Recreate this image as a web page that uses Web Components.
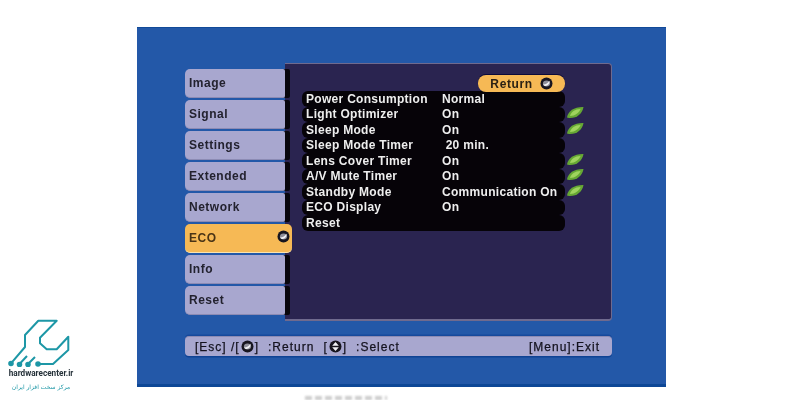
<!DOCTYPE html>
<html>
<head>
<meta charset="utf-8">
<title>ECO</title>
<style>
html,body{margin:0;height:400px;overflow:hidden;background:#fff;font-family:"Liberation Sans",sans-serif;}
</style>
</head>
<body>
<projector-screen>
  <menu-tab>Image</menu-tab>
  <menu-tab>Signal</menu-tab>
  <menu-tab>Settings</menu-tab>
  <menu-tab>Extended</menu-tab>
  <menu-tab>Network</menu-tab>
  <menu-tab active>ECO</menu-tab>
  <menu-tab>Info</menu-tab>
  <menu-tab>Reset</menu-tab>
  <eco-row slot="rows" label="Power Consumption" value="Normal"></eco-row>
  <eco-row slot="rows" label="Light Optimizer" value="On" leaf></eco-row>
  <eco-row slot="rows" label="Sleep Mode" value="On" leaf></eco-row>
  <eco-row slot="rows" label="Sleep Mode Timer" value="&nbsp;20 min."></eco-row>
  <eco-row slot="rows" label="Lens Cover Timer" value="On" leaf></eco-row>
  <eco-row slot="rows" label="A/V Mute Timer" value="On" leaf></eco-row>
  <eco-row slot="rows" label="Standby Mode" value="Communication On" leaf></eco-row>
  <eco-row slot="rows" label="ECO Display" value="On"></eco-row>
  <eco-row slot="rows" label="Reset" value=""></eco-row>
</projector-screen>
<cut-caption></cut-caption>
<site-logo></site-logo>

<script>
// small round "enter" glyph used on the return pill, ECO tab and status bar
const enterIcon = `<svg width="13" height="13" viewBox="0 0 13 13"><circle cx="6.5" cy="6.5" r="6" fill="#17151f"/><ellipse cx="6.5" cy="6.5" rx="3.6" ry="3" fill="#8f8f9a"/><path d="M3 7.5 C6 7.5 8 6 9.5 3.8 C10 6.5 8 9 5.5 9 C4.5 9 3.5 8.4 3 7.5Z" fill="#f2f2f6"/></svg>`;

class MenuTab extends HTMLElement{
    constructor(){
        super();
        this.attachShadow({mode:"open"});
        this.shadowRoot.innerHTML = `
<style>
:host{
    display:flex;
    align-items:center;
    justify-content:space-between;
    box-sizing:border-box;
    position:relative;
    width:100px;
    height:29px;
    padding:0 2px 0 4px;
    background:#a8a7cf;
    border-radius:5px 2px 2px 5px;
    border-bottom:1px solid #8c8bb4;
    box-shadow:5px 0 0 #08060c;
    color:#23222f;
    font-size:12px;
    font-weight:bold;
    letter-spacing:.5px;
}
:host([active]){
    width:107px;
    background:#f6b955;
    border-radius:5px;
    box-shadow:none;
    border-bottom:1px solid #fbe3ae;
    color:#4a3416;
}
</style>
<span><slot></slot></span>
<span id="icon"></span>`;
    }
    connectedCallback(){
        if(this.hasAttribute("active")){
            this.shadowRoot.querySelector("#icon").innerHTML = enterIcon;
        }
    }
}
customElements.define("menu-tab", MenuTab);

class EcoRow extends HTMLElement{
    constructor(){
        super();
        this.attachShadow({mode:"open"});
        this.shadowRoot.innerHTML = `
<style>
:host{
    display:flex;
    align-items:center;
    position:relative;
    height:15.5px;
    padding-left:4px;
    background:#060308;
    border-radius:6px;
    color:#eeeeee;
    font-size:12px;
    font-weight:bold;
    letter-spacing:.3px;
    white-space:nowrap;
}
#label{width:136px;}
svg{position:absolute;left:264px;top:-0.5px;display:none;}
:host([leaf]) svg{display:block;}
</style>
<span id="label"></span>
<span id="value"></span>
<svg width="18" height="13" viewBox="0 0 18 13"><path d="M1 11.5 C2 5 8 .8 17.5 1 C16.5 7.5 11 12.5 3 12 Z" fill="#66a834"/><path d="M4 10 C5 6 9 3 14.5 3 C13.5 6.5 9 10 4 10Z" fill="#9fd45e"/></svg>`;
    }
    connectedCallback(){
        this.shadowRoot.querySelector("#label").textContent = this.getAttribute("label");
        this.shadowRoot.querySelector("#value").textContent = this.getAttribute("value");
    }
}
customElements.define("eco-row", EcoRow);

class ProjectorScreen extends HTMLElement{
    constructor(){
        super();
        this.attachShadow({mode:"open"});
        this.shadowRoot.innerHTML = `
<style>
:host{
    display:block;
    box-sizing:border-box;
    width:529px;
    height:360px;
    margin:27px 0 0 137px;
    padding:35px 54px 0 48px;
    background:#2358a8;
    border-top:1px solid #124a98;
    border-bottom:3px solid #0d4796;
    font-family:"Liberation Sans",sans-serif;
}
#wrap{filter:blur(.5px);}
#main{display:flex;align-items:flex-start;height:258px;}
#tabs{display:flex;flex-direction:column;gap:2px;margin-top:6px;width:100px;flex:none;}
#panel{
    flex:1;
    box-sizing:border-box;
    height:258px;
    padding:11px 46px 0 17px;
    background:#2a2450;
    border:1px solid #6f6a8e;
    border-left:none;
    border-bottom:2px solid #6f6a8e;
    border-radius:0 4px 4px 0;
}
#return{
    display:flex;
    align-items:center;
    justify-content:center;
    gap:7px;
    position:relative;
    box-sizing:border-box;
    width:87px;
    height:17px;
    margin-left:auto;
    background:#f6b955;
    border-radius:8px;
    box-shadow:0 -1px 0 #0b0a3a;
    color:#2c2214;
    font-size:12px;
    font-weight:bold;
    letter-spacing:.6px;
    z-index:1;
}
#rows{margin-top:-1px;}
#bar{
    display:flex;
    align-items:center;
    justify-content:space-between;
    box-sizing:border-box;
    height:20px;
    margin-top:15px;
    padding:0 12px 0 10px;
    background:#a8a7cf;
    border-radius:4px;
    border-top:1px solid #8c8bb4;
    box-shadow:0 1.5px 0 #0f4394,0 -1.5px 0 #16499c;
    color:#14131f;
    font-size:12px;
    letter-spacing:1px;
    -webkit-text-stroke:.25px #14131f;
}
#bar span{display:flex;align-items:center;white-space:pre;}
.g{margin:0 1px;}
.w{margin-left:9px;}
</style>
<div id="wrap">
<div id="main">
  <div id="tabs"><slot></slot></div>
  <div id="panel">
    <div id="return">Return ${enterIcon}</div>
    <div id="rows"><slot name="rows"></slot></div>
  </div>
</div>
<div id="bar">
  <span>[Esc] /[<span class="g">${enterIcon}</span>]<span class="w">:Return</span><span class="w">[</span><span class="g"><svg width="13" height="13" viewBox="0 0 13 13"><circle cx="6.5" cy="6.5" r="6" fill="#17151f"/><path d="M6.5 2 9.8 5.8H3.2ZM6.5 11 3.2 7.2H9.8Z" fill="#f2f2f6"/></svg></span>]<span class="w">:Select</span></span>
  <span>[Menu]:Exit</span>
</div>
</div>`;
    }
}
customElements.define("projector-screen", ProjectorScreen);

// the caption under the photo is cropped by the frame, only its top edge shows
class CutCaption extends HTMLElement{
    constructor(){
        super();
        this.attachShadow({mode:"open"});
        this.shadowRoot.innerHTML = `
<style>
:host{
    display:block;
    width:82px;
    height:4px;
    margin:9px 0 0 305px;
    background:repeating-linear-gradient(90deg,#b9b9b9 0 7px,#fff 7px 10px);
    filter:blur(1px);
    opacity:.7;
}
</style>`;
    }
}
customElements.define("cut-caption", CutCaption);

class SiteLogo extends HTMLElement{
    constructor(){
        super();
        this.attachShadow({mode:"open"});
        this.shadowRoot.innerHTML = `
<style>
:host{
    display:flex;
    flex-direction:column;
    align-items:center;
    position:absolute;
    left:5px;
    top:318px;
    width:72px;
    filter:blur(.3px);
}
svg{display:block;}
#name{font:bold 8.2px Roboto,sans-serif;color:#26323a;line-height:12px;white-space:nowrap;}
#fa{font:6px "DejaVu Sans",sans-serif;color:#1d97a6;line-height:11px;margin-top:2px;white-space:nowrap;}
</style>
<svg width="72" height="49" viewBox="0 0 72 49" fill="none" stroke="#1d97a6" stroke-width="2" stroke-linejoin="round">
  <path d="M6 45.3 L20 29 V17 L33.3 2.7 H51.7 L35 19.7 V25.3 L41.7 31.3 H51.7 L63.3 18.7 V32 L48 46 H33"/>
  <path d="M14.5 46 L22 38 M23 46 L30 39"/>
  <circle cx="6" cy="45.5" r="1.8" fill="#1d97a6"/><circle cx="14.5" cy="46.5" r="1.8" fill="#1d97a6"/><circle cx="23" cy="46.5" r="1.8" fill="#1d97a6"/><circle cx="33" cy="46" r="1.8" fill="#1d97a6"/>
</svg>
<div id="name">hardwarecenter.ir</div>
<div id="fa" dir="rtl" lang="fa">مرکز سخت افزار ایران</div>`;
    }
}
customElements.define("site-logo", SiteLogo);
</script>
</body>
</html>
